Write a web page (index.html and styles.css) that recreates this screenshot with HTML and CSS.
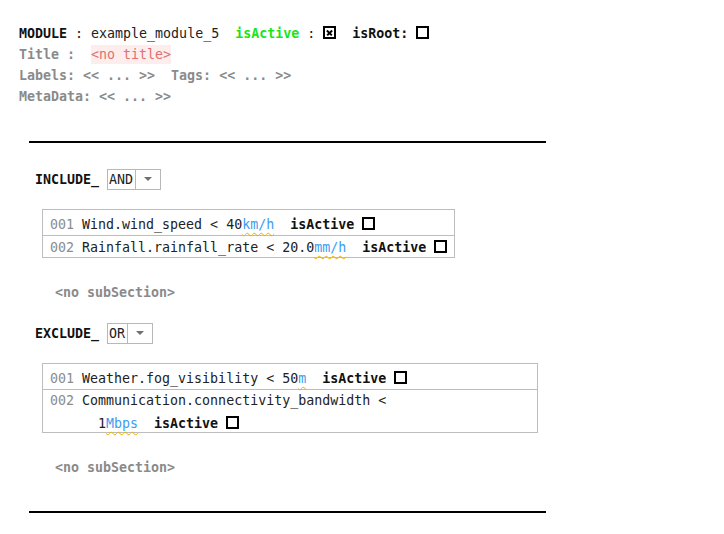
FILE: index.html
```html
<!DOCTYPE html>
<html>
<head>
<meta charset="utf-8">
<link rel="stylesheet" href="styles.css">
</head>
<body>
<div class="editor">
  <div class="header">
    <div class="line"><span class="kw">MODULE</span> : example_module_5  <span class="active">isActive</span> : <span class="cb checked"></span>  <span class="kw">isRoot:</span> <span class="cb"></span></div>
    <div class="line"><span class="gray">Title :  </span><span class="notitle">&lt;no title&gt;</span></div>
    <div class="line gray">Labels: &lt;&lt; ... &gt;&gt;  Tags: &lt;&lt; ... &gt;&gt;</div>
    <div class="line gray">MetaData: &lt;&lt; ... &gt;&gt;</div>
  </div>

  <div class="rule rule-top"></div>

  <div class="section">
    <div class="line op-row"><span class="kw">INCLUDE_ </span><span class="dropdown"><span class="dd-val">AND</span><span class="dd-arrow"></span></span></div>
    <div class="box">
      <div class="row first"><span class="num">001 </span>Wind.wind_speed &lt; 40<span class="unit">km/h</span>  <span class="kw">isActive</span> <span class="cb"></span></div>
      <div class="row low"><span class="num">002 </span>Rainfall.rainfall_rate &lt; 20.0<span class="unit">mm/h</span>  <span class="kw">isActive</span> <span class="cb"></span></div>
    </div>
    <div class="line nosub">&lt;no subSection&gt;</div>

    <div class="line op-row"><span class="kw">EXCLUDE_ </span><span class="dropdown"><span class="dd-val">OR</span><span class="dd-arrow"></span></span></div>
    <div class="box wide">
      <div class="row first"><span class="num">001 </span>Weather.fog_visibility &lt; 50<span class="unit">m</span>  <span class="kw">isActive</span> <span class="cb"></span></div>
      <div class="row"><span class="num">002 </span>Communication.connectivity_bandwidth &lt;</div>
      <div class="row cont">1<span class="unit">Mbps</span>  <span class="kw">isActive</span> <span class="cb"></span></div>
    </div>
    <div class="line nosub">&lt;no subSection&gt;</div>
  </div>

  <div class="rule rule-bottom"></div>
</div>
</body>
</html>
```

FILE: styles.css
```css
html, body {
  margin: 0;
  padding: 0;
  background: #ffffff;
}

.editor {
  font-family: "DejaVu Sans Mono", "Liberation Mono", monospace;
  font-size: 13.3px;
  color: #222222;
  padding: 23px 0 0 19px;
}

.line {
  height: 21px;
  line-height: 21px;
  white-space: pre;
}

.kw {
  font-weight: bold;
  color: #111111;
}

.active {
  font-weight: bold;
  color: #19e619;
}

.gray {
  color: #8a8a8a;
  font-weight: bold;
}

.notitle {
  display: inline-block;
  color: #e07070;
  background: #fdeded;
  line-height: 19px;
  font-weight: normal;
}

.cb {
  display: inline-block;
  width: 9px;
  height: 9px;
  border: 2px solid #000;
  position: relative;
  vertical-align: -1px;
}

.cb.checked::before,
.cb.checked::after {
  content: "";
  position: absolute;
  left: 1px;
  top: 4px;
  width: 7px;
  height: 1.6px;
  background: #000;
}

.cb.checked::before {
  transform: rotate(45deg);
}

.cb.checked::after {
  transform: rotate(-45deg);
}

.rule {
  height: 2px;
  background: #000;
  width: 517px;
  margin-left: 10px;
}

.rule-top {
  margin-top: 34px;
}

.rule-bottom {
  margin-top: 33px;
}

.section {
  padding-left: 16px;
  padding-top: 26px;
}

.dropdown {
  display: inline-flex;
  height: 19px;
  border: 1px solid #b8b8b8;
  vertical-align: top;
}

.dd-val {
  padding: 0 2px 0 1px;
  line-height: 19px;
  color: #222;
  border-right: 1px solid #b8b8b8;
}

.dd-arrow {
  width: 24px;
  height: 19px;
  position: relative;
}

.dd-arrow::after {
  content: "";
  position: absolute;
  left: 8px;
  top: 7px;
  border-left: 4.5px solid transparent;
  border-right: 4.5px solid transparent;
  border-top: 4.5px solid #707070;
}

.box {
  display: table;
  margin: 19px 0 0 7px;
  border: 1px solid #bdbdbd;
}

.box.wide {
  width: 496px;
  box-sizing: border-box;
}

.row {
  height: 21px;
  line-height: 21px;
  padding: 0 7px;
  white-space: pre;
  color: #222222;
}

.row.first {
  padding-top: 4px;
  border-bottom: 1px solid #bdbdbd;
}

.row.low {
  line-height: 24px;
}

.row.cont {
  padding-left: 55px;
  line-height: 25px;
}

.num {
  color: #8c8c8c;
}

.unit {
  color: #3d9cf0;
  text-decoration: underline wavy #e8b000;
  text-decoration-thickness: 1px;
  text-underline-offset: 3px;
}

.nosub {
  color: #8a8a8a;
  font-weight: bold;
  margin: 24px 0 20px 20px;
}

.section > .nosub:last-child {
  margin-bottom: 0;
}
```
